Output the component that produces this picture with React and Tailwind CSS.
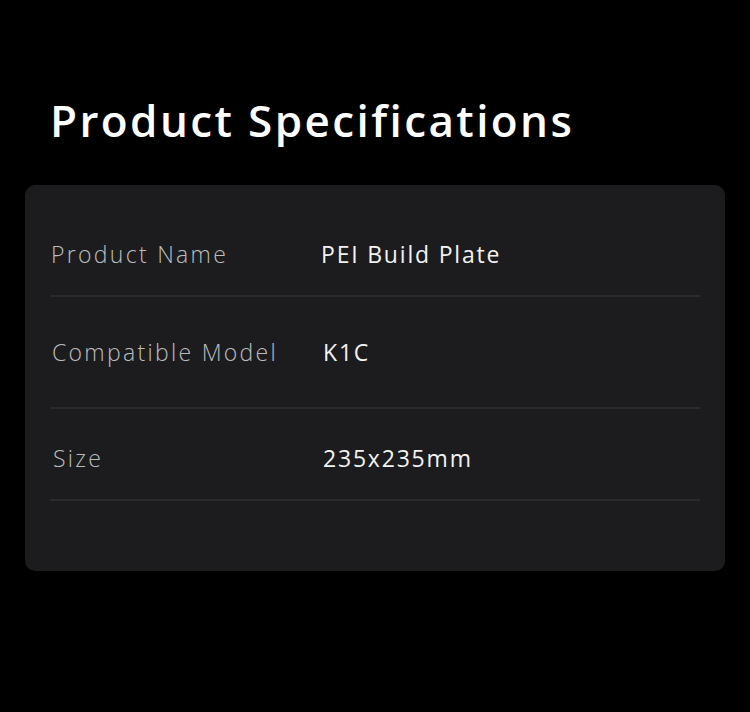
import React from "react";

const specs = [
  { label: "Product Name", value: "PEI Build Plate", h: "h-[84px]", pt: "pt-0", pl: "pl-[1px]", vl: "pl-0" },
  { label: "Compatible Model", value: "K1C", h: "h-[112px]", pt: "pt-0", pl: "pl-[2px]", vl: "pl-[2px]" },
  { label: "Size", value: "235x235mm", h: "h-[92px]", pt: "pt-[8px]", pl: "pl-[3px]", vl: "pl-[2px]" },
];

export default function App() {
  return (
    <div
      className="min-h-screen w-[750px] h-[712px] bg-black text-white"
      style={{ fontFamily: '"Open Sans", "Liberation Sans", sans-serif' }}
    >
      <div className="pt-[92px] px-[25px]">
        {/* Heading */}
        <h1 className="pl-[25px] text-[44px] leading-[56px] font-semibold tracking-[2.4px] text-white">
          Product Specifications
        </h1>

        {/* Spec card */}
        <div className="mt-[37px] bg-[#1c1c1e] rounded-[10px] px-[25px] pt-[28px] pb-[70px]">
          {specs.map((s) => (
            <div
              key={s.label}
              className={`flex items-center border-b-2 border-[#2a2a2c] ${s.h} ${s.pt}`}
            >
              <div className={`w-[271px] ${s.pl} text-[23px] font-light text-[#bcbcbe] tracking-[2.3px]`}>
                {s.label}
              </div>
              <div className={`${s.vl} text-[23px] text-[#f2f2f2] tracking-[1.8px]`}>{s.value}</div>
            </div>
          ))}
        </div>
      </div>
    </div>
  );
}
